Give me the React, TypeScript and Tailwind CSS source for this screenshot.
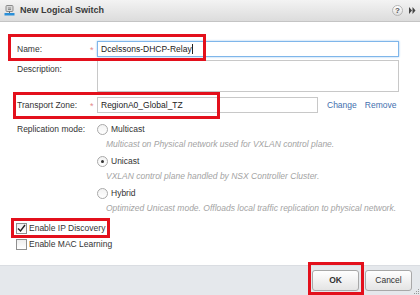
import React from 'react';

const red = 'border-[3px] border-[#e3101c]';

function Radio({ checked }: { checked?: boolean }) {
    return (
        <span className="w-[11px] h-[11px] rounded-full border border-[#a9a9a9] bg-gradient-to-b from-[#f2f2f2] to-white flex items-center justify-center shrink-0">
            {checked && <span className="w-[3px] h-[3px] rounded-full bg-[#333]" />}
        </span>
    );
}

function Check({ checked }: { checked?: boolean }) {
    return (
        <span className="w-[11px] h-[11px] border border-[#8f8f8f] bg-gradient-to-b from-[#eeeeee] to-white flex items-center justify-center shrink-0">
            {checked && (
                <svg width="9" height="9" viewBox="0 0 9 9">
                    <path d="M1 4.5 L3.5 7 L8 1" fill="none" stroke="#222" strokeWidth="1.4" />
                </svg>
            )}
        </span>
    );
}

function ReplOption({ label, desc, checked }: { label: string; desc: string; checked?: boolean }) {
    return (
        <div className="h-[32px]">
            <div className="h-[12px] flex items-center gap-[3px]">
                <Radio checked={checked} />
                <span className="text-[#333]">{label}</span>
            </div>
            <div className="mt-[4px] h-[10px] leading-[10px] pl-[9px] italic text-[#a3a3a3]">{desc}</div>
        </div>
    );
}

function Req() {
    return <span className="w-[7px] h-[16px] flex items-center text-[#e38a8a] text-[9px] leading-none pt-[3px]">*</span>;
}

export default function App() {
    return (
        <div
            className="relative w-[420px] h-[295px] overflow-hidden bg-white flex flex-col text-[8.5px] text-[#333]"
            style={{ fontFamily: '"Liberation Sans", Arial, sans-serif' }}
        >
            {/* title bar */}
            <div className="h-[22px] shrink-0 flex items-center bg-gradient-to-b from-[#f3f3f3] to-[#dcdcdc] border-b border-[#c4c4c4]">
                <svg className="ml-[4px]" width="11" height="11" viewBox="0 0 11 11">
                    <rect x="2" y="0.5" width="7" height="6" rx="1" fill="#d8d8d8" stroke="#8a8a8a" />
                    <path d="M4 3 h3 M4 4.5 h3" stroke="#777" strokeWidth="0.8" />
                    <path d="M5.5 6.5 V8" stroke="#666" />
                    <rect x="0.5" y="8" width="10" height="2.5" fill="#2a8fd8" />
                </svg>
                <span className="ml-[5px] font-bold text-[9px] text-[#3a3a3a]">New Logical Switch</span>
                <div className="ml-auto mr-[4px] flex items-center gap-[6px]">
                    <span className="w-[11px] h-[11px] rounded-full border border-[#b5b5b5] bg-gradient-to-b from-white to-[#dedede] flex items-center justify-center text-[8px] font-bold text-[#555] leading-none">?</span>
                    <svg width="7" height="7" viewBox="0 0 7 7">
                        <path d="M0 0 L3 3.5 L0 7 Z M3.5 0 L6.5 3.5 L3.5 7 Z" fill="#444" />
                    </svg>
                </div>
            </div>

            {/* body */}
            <div className="flex-1 pl-[17px] pt-[19px]">
                <div className="flex items-center h-[16px]">
                    <span className="w-[73px]">Name:</span>
                    <Req />
                    <div className="w-[302px] h-[16px] border border-[#7fb6ea] shadow-[0_0_2px_#9cc8f0] flex items-center pl-[3px] text-[#222]">
                        Dcelssons-DHCP-Relay<span className="w-px h-[10px] bg-[#222]" />
                    </div>
                </div>
                <div className="flex mt-[3px]">
                    <span className="w-[80px] pt-[3px]">Description:</span>
                    <div className="w-[302px] h-[32px] border border-[#c8c8c8]" />
                </div>
                <div className="flex items-center h-[16px] mt-[5px]">
                    <span className="w-[73px]">Transport Zone:</span>
                    <Req />
                    <div className="w-[221px] h-[16px] border border-[#c8c8c8] flex items-center pl-[3px] text-[#222]">RegionA0_Global_TZ</div>
                    <span className="ml-[9px] text-[#3f6fae]">Change</span>
                    <span className="ml-[8px] text-[#3f6fae]">Remove</span>
                </div>

                <div className="flex mt-[10px]">
                    <div className="w-[80px] h-[12px] flex items-center">Replication mode:</div>
                    <div>
                        <ReplOption label="Multicast" desc="Multicast on Physical network used for VXLAN control plane." />
                        <ReplOption label="Unicast" desc="VXLAN control plane handled by NSX Controller Cluster." checked />
                        <ReplOption label="Hybrid" desc="Optimized Unicast mode. Offloads local traffic replication to physical network." />
                    </div>
                </div>

                <div className="mt-[3px] h-[12px] flex items-center gap-[2px] -ml-[1px]">
                    <Check checked />
                    <span>Enable IP Discovery</span>
                </div>
                <div className="mt-[4px] h-[12px] flex items-center gap-[2px] -ml-[1px]">
                    <Check />
                    <span>Enable MAC Learning</span>
                </div>
            </div>

            {/* footer */}
            <div className="h-[30px] shrink-0 bg-[#e5e8ec] border-t border-[#dadde2] flex items-center justify-end gap-[6px] pr-[8px]">
                <button className="w-[47px] h-[21px] rounded-[3px] border border-[#a8a8a8] bg-gradient-to-b from-white to-[#e4e4e4] font-bold text-[#333]">OK</button>
                <button className="w-[47px] h-[21px] rounded-[3px] border border-[#a8a8a8] bg-gradient-to-b from-white to-[#e4e4e4] text-[#333]">Cancel</button>
            </div>
            <svg className="absolute right-[1px] bottom-[1px]" width="6" height="6" viewBox="0 0 6 6">
                <path d="M5 1 h1 v1 h-1z M3 3 h1 v1 h-1z M5 3 h1 v1 h-1z M1 5 h1 v1 h-1z M3 5 h1 v1 h-1z M5 5 h1 v1 h-1z" fill="#999" />
            </svg>

            {/* annotation highlights */}
            <div className={`absolute left-[8px] top-[34px] w-[198px] h-[27px] ${red}`} />
            <div className={`absolute left-[13px] top-[92px] w-[207px] h-[27px] ${red}`} />
            <div className={`absolute left-[11px] top-[218px] w-[99px] h-[20px] ${red}`} />
            <div className={`absolute left-[308px] top-[262px] w-[56px] h-[33px] ${red}`} />
        </div>
    );
}
